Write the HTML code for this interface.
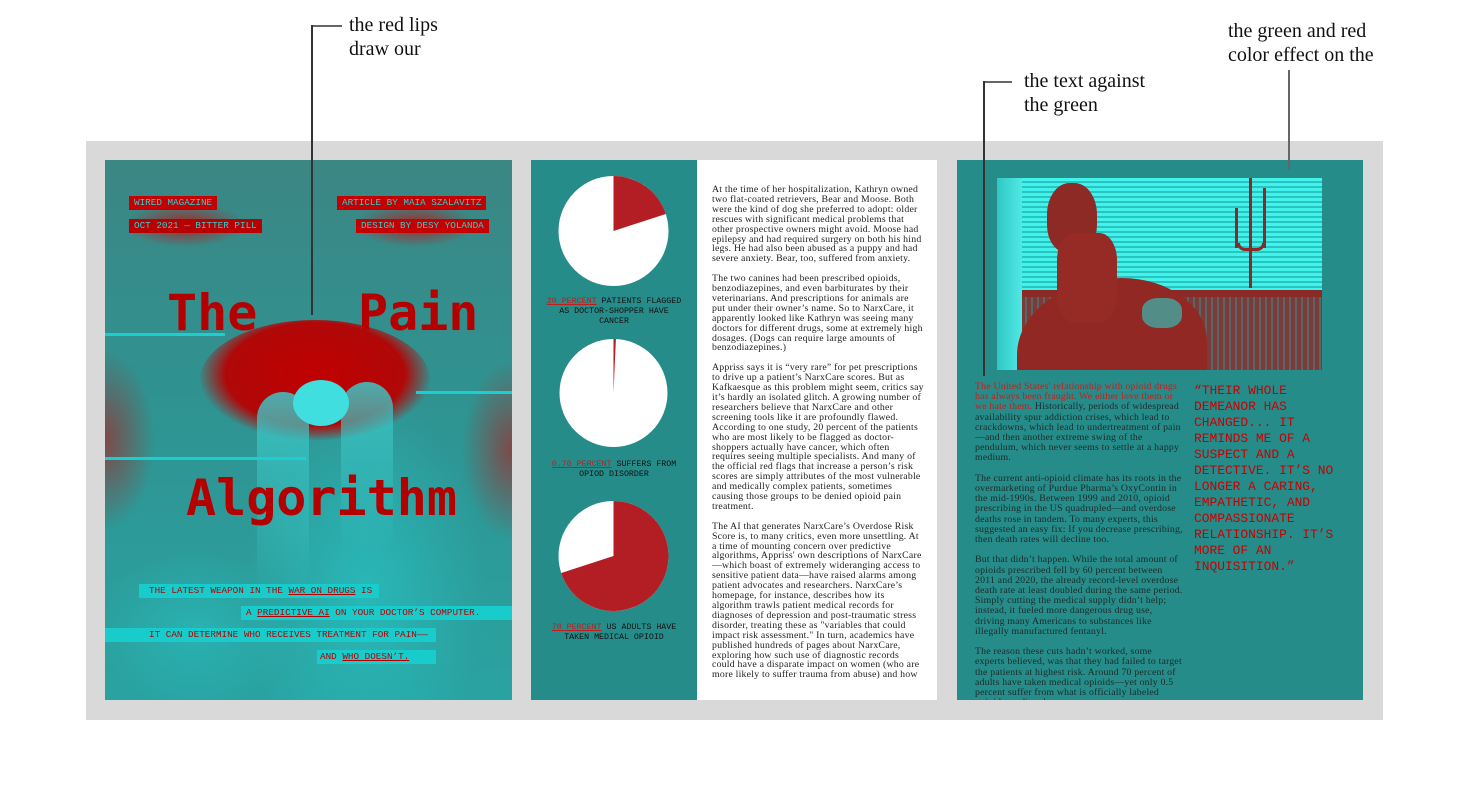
<!DOCTYPE html>
<html><head><meta charset="utf-8"><style>
*{margin:0;padding:0;box-sizing:border-box}
body{width:1477px;height:800px;background:#fff;position:relative;overflow:hidden;font-family:"Liberation Serif",serif}
.a{position:absolute}
.ann{position:absolute;font-family:"Liberation Serif",serif;font-size:20px;line-height:24px;color:#111}
.ln{position:absolute;background:#666;z-index:5}
.mono{font-family:"DejaVu Sans Mono","Liberation Mono",monospace}
.tag{position:absolute;background:#c40000;color:#2fd0d0;font-family:"Liberation Mono",monospace;font-size:9.3px;line-height:14px;padding:0 5px;white-space:nowrap}
.cy{position:absolute;background:#19cccc;color:#b30000;font-family:"Liberation Mono",monospace;font-size:9.3px;line-height:14px;white-space:nowrap}
.cy u{text-decoration:underline}
.body{position:absolute;font-family:"Liberation Serif",serif;font-size:9.8px;letter-spacing:0.22px;line-height:9.9px;color:#222}
.body p{margin-bottom:9.9px}
.cap{position:absolute;width:140px;text-align:center;font-family:"Liberation Mono",monospace;font-size:8.3px;line-height:10px;color:#111}
.cap span{color:#c01d1d;text-decoration:underline}
</style></head><body>

<div class="ann" style="left:349px;top:13px">the red lips<br>draw our</div>
<div class="ann" style="left:1024px;top:69px">the text against<br>the green</div>
<div class="ann" style="left:1228px;top:19px">the green and red<br>color effect on the</div>

<div class="a" style="left:86px;top:141px;width:1297px;height:579px;background:#d9d9d9"></div>

<div class="a" style="left:105px;top:160px;width:407px;height:540px;overflow:hidden;background:#2d8f8e">
  <div class="a" style="left:0;top:0;width:407px;height:540px;background:
   radial-gradient(ellipse 60px 22px at 80px 65px,rgba(185,20,20,.85) 0%,rgba(185,20,20,0) 100%),
   radial-gradient(ellipse 60px 22px at 310px 65px,rgba(185,20,20,.85) 0%,rgba(185,20,20,0) 100%),
   radial-gradient(ellipse 50px 90px at 0px 280px,rgba(160,40,40,.7) 0%,rgba(160,40,40,0) 100%),
   radial-gradient(ellipse 50px 90px at 407px 290px,rgba(160,40,40,.7) 0%,rgba(160,40,40,0) 100%),
   radial-gradient(ellipse 120px 200px at 260px 430px,rgba(40,190,190,.8) 0%,rgba(40,190,190,0) 100%),
   radial-gradient(ellipse 100px 80px at 90px 470px,rgba(40,190,190,.6) 0%,rgba(40,190,190,0) 100%),
   linear-gradient(#3c8684,#2f9391 45%,#29a3a2)"></div>
  <div class="a" style="left:95px;top:160px;width:230px;height:120px;border-radius:50%;background:radial-gradient(ellipse at 50% 45%,#c00000 0%,#b00808 55%,rgba(176,8,8,0) 72%)"></div>
  <div class="a" style="left:152px;top:232px;width:52px;height:200px;border-radius:26px 26px 20px 20px;background:linear-gradient(#3ccaca,rgba(34,176,176,0));opacity:.85"></div>
  <div class="a" style="left:236px;top:222px;width:52px;height:170px;border-radius:26px 26px 20px 20px;background:linear-gradient(#3ccaca,rgba(37,168,168,0));opacity:.85"></div>
  <div class="a" style="left:188px;top:220px;width:56px;height:46px;border-radius:50%;background:#40dede"></div>
</div>
<div class="tag" style="left:129px;top:196px">WIRED MAGAZINE</div>
<div class="tag" style="left:129px;top:219px;background:#b80000">OCT 2021 — BITTER PILL</div>
<div class="tag" style="left:337px;top:196px">ARTICLE BY MAIA SZALAVITZ</div>
<div class="tag" style="left:356px;top:219px">DESIGN BY DESY YOLANDA</div>
<div class="a mono" style="left:167px;top:283px;font-size:50px;line-height:60px;font-weight:bold;color:#b50000">The</div>
<div class="a mono" style="left:358px;top:283px;font-size:50px;line-height:60px;font-weight:bold;color:#b50000">Pain</div>
<div class="a mono" style="left:186px;top:468px;font-size:50px;line-height:60px;font-weight:bold;color:#b50000">Algorithm</div>
<div class="a" style="left:105px;top:333px;width:120px;height:3px;background:#1ccfcf"></div>
<div class="a" style="left:416px;top:391px;width:96px;height:3px;background:#1ccfcf"></div>
<div class="a" style="left:105px;top:457px;width:201px;height:3px;background:#1ccfcf"></div>
<div class="cy" style="left:139px;top:584px;width:240px;padding-left:10px">THE LATEST WEAPON IN THE <u>WAR ON DRUGS</u> IS</div>
<div class="cy" style="left:241px;top:606px;width:271px;padding-left:5px">A <u>PREDICTIVE AI</u> ON YOUR DOCTOR’S COMPUTER.</div>
<div class="cy" style="left:105px;top:628px;width:331px;padding-left:44px">IT CAN DETERMINE WHO RECEIVES TREATMENT FOR PAIN——</div>
<div class="cy" style="left:317px;top:650px;width:119px;padding-left:3px">AND <u>WHO DOESN’T.</u></div>

<div class="a" style="left:531px;top:160px;width:166px;height:540px;background:#268c89"></div>
<div class="a" style="left:697px;top:160px;width:240px;height:540px;background:#fff"></div>
<svg class="a" style="left:531px;top:160px" width="166" height="540">
 <circle cx="82.5" cy="71" r="55" fill="#fff"/>
 <path d="M82.5 71 L82.5 16 A55 55 0 0 1 134.8 54 Z" fill="#b31e24"/>
 <circle cx="82.5" cy="233" r="54" fill="#fff"/>
 <path d="M82.5 233 L82.5 179 A54 54 0 0 1 84.9 179.05 Z" fill="#b31e24"/>
 <circle cx="82.5" cy="396" r="55" fill="#fff"/>
 <path d="M82.5 396 L82.5 341 A55 55 0 1 1 30.2 413 Z" fill="#b31e24"/>
</svg>
<div class="cap" style="left:544px;top:297px"><span>20 PERCENT</span> PATIENTS FLAGGED AS DOCTOR-SHOPPER HAVE CANCER</div>
<div class="cap" style="left:544px;top:460px"><span>0.70 PERCENT</span> SUFFERS FROM OPIOD DISORDER</div>
<div class="cap" style="left:544px;top:623px"><span>70 PERCENT</span> US ADULTS HAVE TAKEN MEDICAL OPIOID</div>
<div class="body" style="left:712px;top:185px;width:212px;height:515px;overflow:hidden">
<p>At the time of her hospitalization, Kathryn owned two flat-coated retrievers, Bear and Moose. Both were the kind of dog she preferred to adopt: older rescues with significant medical problems that other prospective owners might avoid. Moose had epilepsy and had required surgery on both his hind legs. He had also been abused as a puppy and had severe anxiety. Bear, too, suffered from anxiety.</p>
<p>The two canines had been prescribed opioids, benzodiazepines, and even barbiturates by their veterinarians. And prescriptions for animals are put under their owner’s name. So to NarxCare, it apparently looked like Kathryn was seeing many doctors for different drugs, some at extremely high dosages. (Dogs can require large amounts of benzodiazepines.)</p>
<p>Appriss says it is “very rare” for pet prescriptions to drive up a patient’s NarxCare scores. But as Kafkaesque as this problem might seem, critics say it’s hardly an isolated glitch. A growing number of researchers believe that NarxCare and other screening tools like it are profoundly flawed. According to one study, 20 percent of the patients who are most likely to be flagged as doctor-shoppers actually have cancer, which often requires seeing multiple specialists. And many of the official red flags that increase a person’s risk scores are simply attributes of the most vulnerable and medically complex patients, sometimes causing those groups to be denied opioid pain treatment.</p>
<p>The AI that generates NarxCare’s Overdose Risk Score is, to many critics, even more unsettling. At a time of mounting concern over predictive algorithms, Appriss' own descriptions of NarxCare—which boast of extremely wideranging access to sensitive patient data—have raised alarms among patient advocates and researchers. NarxCare’s homepage, for instance, describes how its algorithm trawls patient medical records for diagnoses of depression and post-traumatic stress disorder, treating these as "variables that could impact risk assessment." In turn, academics have published hundreds of pages about NarxCare, exploring how such use of diagnostic records could have a disparate impact on women (who are more likely to suffer trauma from abuse) and how</p>
</div>

<div class="a" style="left:957px;top:160px;width:406px;height:540px;background:#268c89"></div>
<div class="a" style="left:997px;top:178px;width:325px;height:192px;overflow:hidden;background:repeating-linear-gradient(#44f2ec 0 3px,#28c4c0 3px 5px)">
  <div class="a" style="left:0;top:118px;width:325px;height:74px;background:repeating-linear-gradient(90deg,#7a3c3a 0 4px,#5d6462 4px 6px)"></div>
  <div class="a" style="left:0;top:112px;width:325px;height:7px;background:#8a2a26"></div>
  <div class="a" style="left:0;top:0;width:25px;height:192px;background:linear-gradient(90deg,#30c8c4,#50e8e4)"></div>
  <div class="a" style="left:20px;top:100px;width:190px;height:140px;border-radius:55% 45% 0 0;background:#922823"></div>
  <div class="a" style="left:50px;top:5px;width:50px;height:70px;border-radius:45% 45% 40% 40%;background:#8e2a26"></div>
  <div class="a" style="left:60px;top:55px;width:60px;height:90px;border-radius:30%;background:#962a25"></div>
  <div class="a" style="left:145px;top:120px;width:40px;height:30px;border-radius:40%;background:#2ad0cc;opacity:.6"></div>
  <div class="a" style="left:252px;top:0;width:3px;height:110px;background:#8a2a28"></div>
  <div class="a" style="left:238px;top:30px;width:3px;height:40px;background:#8a2a28"></div>
  <div class="a" style="left:266px;top:10px;width:3px;height:60px;background:#8a2a28"></div>
  <div class="a" style="left:240px;top:65px;width:28px;height:8px;border-radius:0 0 14px 14px;border:3px solid #8a2a28;border-top:none"></div>
</div>
<div class="body" style="left:975px;top:382px;width:208px;height:318px;overflow:hidden;color:#1a2a2a;line-height:10.2px;letter-spacing:0.2px">
<p style="margin-bottom:10.2px"><span style="color:#c0201f">The United States' relationship with opioid drugs has always been fraught. We either love them or we hate them.</span> Historically, periods of widespread availability spur addiction crises, which lead to crackdowns, which lead to undertreatment of pain—and then another extreme swing of the pendulum, which never seems to settle at a happy medium.</p>
<p style="margin-bottom:10.2px">The current anti-opioid climate has its roots in the overmarketing of Purdue Pharma’s OxyContin in the mid-1990s. Between 1999 and 2010, opioid prescribing in the US quadrupled—and overdose deaths rose in tandem. To many experts, this suggested an easy fix: If you decrease prescribing, then death rates will decline too.</p>
<p style="margin-bottom:10.2px">But that didn’t happen. While the total amount of opioids prescribed fell by 60 percent between 2011 and 2020, the already record-level overdose death rate at least doubled during the same period. Simply cutting the medical supply didn’t help; instead, it fueled more dangerous drug use, driving many Americans to substances like illegally manufactured fentanyl.</p>
<p>The reason these cuts hadn’t worked, some experts believed, was that they had failed to target the patients at highest risk. Around 70 percent of adults have taken medical opioids—yet only 0.5 percent suffer from what is officially labeled opioid use disorder.</p>
</div>
<div class="a" style="left:1194px;top:383px;width:150px;font-family:'Liberation Mono',monospace;font-size:12.9px;line-height:16px;color:#c80000">“THEIR WHOLE DEMEANOR HAS CHANGED... IT REMINDS ME OF A SUSPECT AND A DETECTIVE. IT’S NO LONGER A CARING, EMPATHETIC, AND COMPASSIONATE RELATIONSHIP. IT’S MORE OF AN INQUISITION.”</div>

<div class="ln" style="left:311px;top:25px;width:31px;height:1.5px"></div>
<div class="ln" style="left:311px;top:25px;width:1.5px;height:290px;background:#333"></div>
<div class="ln" style="left:983px;top:81px;width:29px;height:1.5px"></div>
<div class="ln" style="left:983px;top:81px;width:1.5px;height:295px;background:#333"></div>
<div class="ln" style="left:1288px;top:70px;width:1.5px;height:100px"></div>
</body></html>
